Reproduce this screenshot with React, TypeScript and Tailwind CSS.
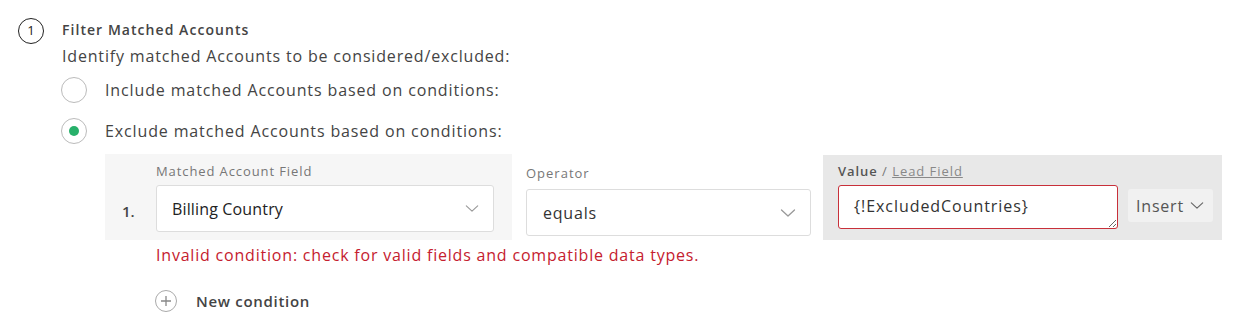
import React from 'react'

// Filter step: matched accounts condition editor

const Chevron = ({ className = '' }: { className?: string }) => (
  <svg viewBox="0 0 16 10" className={className} fill="none" stroke="currentColor" strokeWidth="1.3" strokeLinecap="round" strokeLinejoin="round">
    <path d="M1.5 2 L8 8 L14.5 2" />
  </svg>
)

const Radio = ({ checked, label }: { checked?: boolean; label: string }) => (
  <label className="flex items-center h-[26px] text-[16px] tracking-[0.87px] text-[#444]">
    <span className="w-[26px] h-[26px] rounded-full border border-[#bbb] bg-white flex items-center justify-center shrink-0">
      {checked && <span className="w-[10px] h-[10px] rounded-full bg-[#27b06a]" />}
    </span>
    <span className="ml-[18px]">{label}</span>
  </label>
)

export default function App() {
  return (
    <div className="w-[1248px] h-[328px] bg-white pl-[18px] pt-[18px]" style={{ fontFamily: '"Open Sans", "Liberation Sans", sans-serif' }}>
      <div className="flex">
        <div className="w-[26px] h-[26px] rounded-full border-[1.5px] border-[#222] flex items-center justify-center text-[13px] text-[#222] shrink-0">
          1
        </div>
        <div className="ml-[18px] flex flex-col">
          <div className="text-[14px] leading-[20px] font-semibold tracking-[1.05px] text-[#444] mt-[2px]">Filter Matched Accounts</div>
          <div className="text-[16px] leading-[22px] tracking-[0.83px] text-[#444] mt-[5px]">Identify matched Accounts to be considered/excluded:</div>

          <div className="ml-[-1px] mt-[10px] flex flex-col gap-[15px]">
            <Radio label="Include matched Accounts based on conditions:" />
            <Radio checked label="Exclude matched Accounts based on conditions:" />
          </div>

          <div className="ml-[43px] mt-[10px] flex h-[86px]">
            <div className="w-[407px] bg-[#f6f6f6] flex">
              <div className="w-[51px] pl-[17px] pt-[46px] text-[15px] font-semibold text-[#444]">1.</div>
              <div className="pt-[8px] flex flex-col">
                <div className="text-[13px] leading-[18px] tracking-[0.9px] text-[#777]">Matched Account Field</div>
                <div className="mt-[5px] w-[338px] h-[47px] bg-white border border-[#ddd] rounded-[3px] flex items-center justify-between pl-[15px] pr-[14px] text-[16px] tracking-[0.15px] text-[#222]">
                  <span>Billing Country</span>
                  <Chevron className="w-[14px] h-[9px] text-[#999]" />
                </div>
              </div>
            </div>

            <div className="w-[311px] pl-[14px] pt-[10px] flex flex-col">
              <div className="text-[13px] leading-[18px] tracking-[1px] text-[#777]">Operator</div>
              <div className="mt-[7px] w-[285px] h-[47px] bg-white border border-[#ddd] rounded-[3px] flex items-center justify-between pl-[16px] pr-[14px] text-[16px] tracking-[0.8px] text-[#333]">
                <span>equals</span>
                <Chevron className="w-[16px] h-[10px] text-[#999]" />
              </div>
            </div>

            <div className="w-[399px] mt-[1px] bg-[#e8e8e8] pl-[15px] pt-[7px] flex flex-col">
              <div className="text-[13px] leading-[18px] tracking-[0.95px] text-[#555]">
                <span className="font-semibold">Value</span>
                <span className="text-[#777]"> / </span>
                <span className="underline text-[#888]">Lead Field</span>
              </div>
              <div className="mt-[5px] flex items-start">
                <textarea
                  readOnly
                  defaultValue="{!ExcludedCountries}"
                  className="w-[280px] h-[44px] bg-white border-[1.5px] border-[#c8303a] rounded-[3px] pl-[15px] pt-[9px] text-[16px] leading-[22px] tracking-[0.95px] text-[#333] outline-none resize"
                />
                <button className="ml-[10px] mt-[4px] w-[85px] h-[33px] bg-[#f1f1f1] rounded-[3px] flex items-center pl-[8px] text-[16px] tracking-[0.8px] text-[#555]">
                  Insert
                  <Chevron className="ml-[6px] w-[14px] h-[9px] text-[#666]" />
                </button>
              </div>
            </div>
          </div>

          <div className="ml-[94px] mt-[4px] text-[16px] leading-[22px] tracking-[0.8px] text-[#c5202e]">
            Invalid condition: check for valid fields and compatible data types.
          </div>

          <div className="ml-[93px] mt-[24px] flex items-center">
            <span className="w-[22px] h-[22px] rounded-full border border-[#aaa] flex items-center justify-center">
              <svg viewBox="0 0 12 12" className="w-[12px] h-[12px]" stroke="#888" strokeWidth="1.3">
                <path d="M6 1 V11 M1 6 H11" />
              </svg>
            </span>
            <span className="ml-[19px] text-[15px] font-semibold tracking-[0.7px] text-[#444]">New condition</span>
          </div>
        </div>
      </div>
    </div>
  )
}
